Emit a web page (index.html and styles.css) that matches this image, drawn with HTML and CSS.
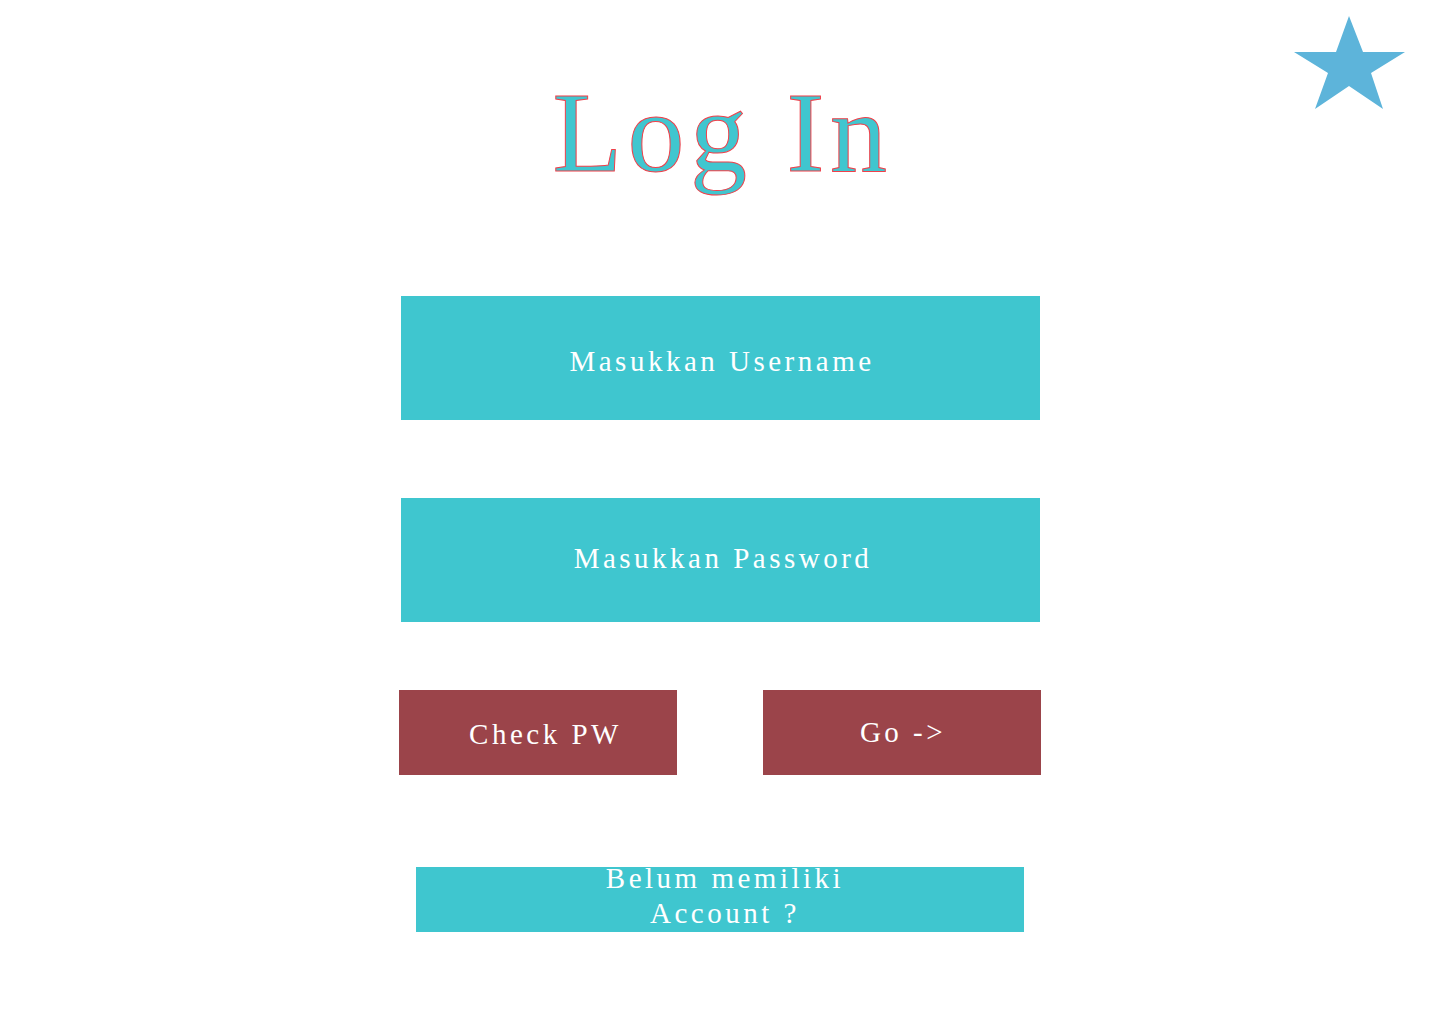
FILE: index.html
```html
<!DOCTYPE html>
<html lang="id">
<head>
<meta charset="utf-8">
<title>Log In</title>
<link rel="stylesheet" href="styles.css">
</head>
<body>
<div class="page">
  <svg class="star" width="112" height="96" viewBox="0 0 112 96" aria-hidden="true">
    <polygon points="55,0 69,36 111,36 77,57 89,93 55,70 21,93 34,57 0,36 42,36" fill="#5db4da"/>
  </svg>
  <h1 class="title">Log In</h1>
  <div class="field">Masukkan Username</div>
  <div class="field field-pw">Masukkan Password</div>
  <div class="actions">
    <div class="btn btn-check">Check PW</div>
    <div class="btn btn-go">Go -&gt;</div>
  </div>
  <div class="signup">Belum memiliki<br>Account ?</div>
</div>
</body>
</html>
```

FILE: styles.css
```css
html, body {
  margin: 0;
  padding: 0;
  background: #ffffff;
}
body {
  font-family: "Liberation Serif", "Times New Roman", serif;
}
.page {
  position: relative;
  width: 1440px;
  height: 1024px;
  display: flex;
  flex-direction: column;
  align-items: center;
}
.star {
  position: absolute;
  top: 16px;
  left: 1294px;
}
.title {
  margin: 68px 0 0 0;
  font-size: 114px;
  line-height: 130px;
  font-weight: normal;
  letter-spacing: 5.5px;
  color: #40c6cf;
  -webkit-text-stroke: 1px #f0404a;
  padding-left: 5px;
}
.field {
  width: 639px;
  height: 124px;
  background: #3fc6cf;
  color: #ffffff;
  font-size: 29px;
  letter-spacing: 3.5px;
  display: flex;
  align-items: center;
  justify-content: center;
  margin-top: 98px;
  padding-top: 6px;
  padding-left: 4px;
  box-sizing: border-box;
}
.field-pw {
  margin-top: 78px;
  padding-top: 0;
  padding-bottom: 4px;
  padding-left: 6px;
}
.actions {
  width: 642px;
  display: flex;
  justify-content: space-between;
  margin-top: 68px;
}
.btn {
  width: 278px;
  height: 85px;
  background: #9b444a;
  color: #ffffff;
  font-size: 29px;
  letter-spacing: 3.5px;
  display: flex;
  align-items: center;
  justify-content: center;
  box-sizing: border-box;
}
.btn-check {
  padding-top: 4px;
  padding-left: 15px;
}
.btn-go {
  padding-left: 2px;
}
.signup {
  width: 608px;
  height: 65px;
  margin-top: 92px;
  background: #3fc6cf;
  color: #ffffff;
  font-size: 29px;
  letter-spacing: 3.5px;
  line-height: 35px;
  text-align: center;
  display: flex;
  flex-direction: column;
  justify-content: center;
  align-items: center;
  padding: 0 0 8px 10px;
  box-sizing: border-box;
}
```
